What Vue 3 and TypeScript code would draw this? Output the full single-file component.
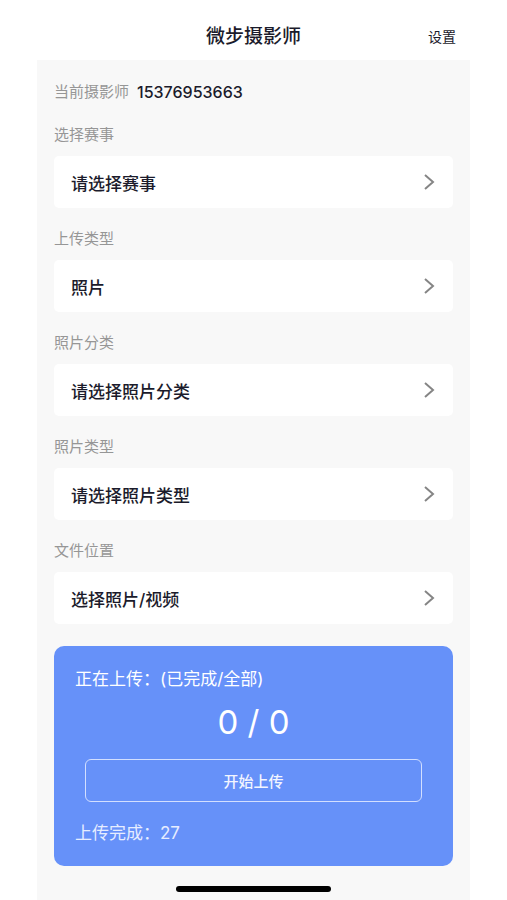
<script setup lang="ts">
import { ref } from 'vue'

interface Field {
  id: string
  label: string
  value: string
}

const phone = ref('15376953663')
const done = ref(0)
const total = ref(0)
const finished = ref(27)

const fields: Field[] = [
  { id: 'event', label: '选择赛事', value: '请选择赛事' },
  { id: 'upload-type', label: '上传类型', value: '照片' },
  { id: 'category', label: '照片分类', value: '请选择照片分类' },
  { id: 'photo-type', label: '照片类型', value: '请选择照片类型' },
  { id: 'files', label: '文件位置', value: '选择照片/视频' },
]
</script>

<template>
  <div class="page">
    <header class="bar">
      <h1 class="title">微步摄影师</h1>
      <button type="button" class="settings">设置</button>
    </header>

    <main class="content">
      <p class="user">
        <span class="caption">当前摄影师</span>
        <span class="phone">{{ phone }}</span>
      </p>

      <div v-for="field in fields" :key="field.id" class="field">
        <label :for="field.id" class="caption">{{ field.label }}</label>
        <button :id="field.id" type="button" class="picker">
          <span>{{ field.value }}</span>
          <svg class="chevron" viewBox="0 0 12 18" aria-hidden="true">
            <path d="M2 2 L10 9 L2 16" />
          </svg>
        </button>
      </div>

      <section class="upload">
        <p class="line">正在上传：(已完成/全部)</p>
        <p class="count">{{ done }} / {{ total }}</p>
        <button type="button" class="start">开始上传</button>
        <p class="line soft">上传完成：{{ finished }}</p>
      </section>

      <div class="home"></div>
    </main>
  </div>
</template>

<style>
body {
  margin: 0;
  background: #fff;
}
</style>

<style scoped>
.page {
  box-sizing: border-box;
  display: flex;
  flex-direction: column;
  min-height: 100vh;
  padding: 0 37px;
  color: #1b1b2b;
  font-family: Inter, 'Noto Sans CJK SC', sans-serif;
}

button {
  margin: 0;
  border: 0;
  background: none;
  color: inherit;
  font-family: inherit;
  cursor: pointer;
}

p,
h1 {
  margin: 0;
}

.bar {
  display: grid;
  grid-template-columns: 1fr auto 1fr;
  align-items: center;
  box-sizing: border-box;
  height: 60px;
  padding: 14px 14px 0;
}

.title {
  grid-column: 2;
  font-size: 19px;
  font-weight: 500;
  line-height: 28px;
}

.settings {
  justify-self: end;
  padding: 0;
  font-size: 14px;
  line-height: 20px;
}

.content {
  flex: 1;
  display: flex;
  flex-direction: column;
  padding: 21px 17px 8px;
  background: #f8f8f8;
}

.user {
  display: flex;
  align-items: center;
  gap: 8px;
  height: 22px;
  margin-bottom: 21px;
}

.caption {
  color: #969696;
  font-size: 15px;
  line-height: 22px;
}

.phone {
  font-size: 16px;
  font-weight: 500;
  line-height: 22px;
}

.field {
  display: flex;
  flex-direction: column;
  gap: 10px;
  margin-bottom: 20px;
}

.picker {
  display: flex;
  align-items: center;
  justify-content: space-between;
  height: 52px;
  padding: 0 18px 0 17px;
  border-radius: 5px;
  background: #fff;
  font-size: 17px;
  font-weight: 500;
  text-align: left;
}

.chevron {
  width: 12px;
  height: 18px;
  fill: none;
  stroke: #858585;
  stroke-width: 2;
}

.upload {
  display: flex;
  flex-direction: column;
  margin-top: 2px;
  padding: 21px;
  border-radius: 10px;
  background: #6691f9;
  color: #fff;
}

.line {
  font-size: 17px;
  line-height: 24px;
}

.soft {
  color: #e6edff;
}

.count {
  margin: 10px 0 16px;
  font-size: 33px;
  line-height: 42px;
  text-align: center;
}

.start {
  height: 43px;
  margin: 0 10px 19px;
  border: 1px solid #d3dfff;
  border-radius: 6px;
  color: #f2f5ff;
  font-size: 15px;
  font-weight: 500;
}

.home {
  align-self: center;
  width: 155px;
  height: 6px;
  margin-top: auto;
  border-radius: 3px;
  background: #000;
}
</style>
